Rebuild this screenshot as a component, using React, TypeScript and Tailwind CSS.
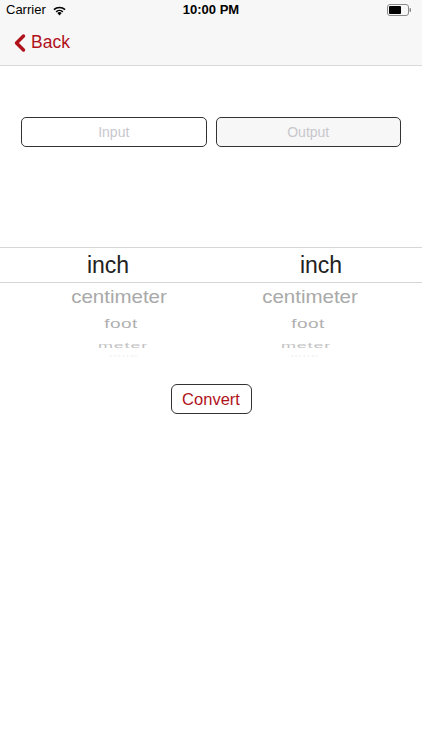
import { ChevronLeft } from "lucide-react";

const units = ["inch", "centimeter", "foot", "meter"];

// wheel rows curve toward the middle of the screen, so each row gets a small x offset
function PickerColumn({ selected, side }: { selected: string; side: "left" | "right" }) {
    const left = side === "left";
    return (
        <div className="flex-1 flex flex-col items-center">
            <div className="h-[36px] flex items-center text-[23px] text-[#222]">{selected}</div>
            <div className={`h-[29px] flex items-center text-[20.5px] text-[#a9a9a9] [transform:scaleY(0.88)] ${left ? "translate-x-[11px]" : "-translate-x-[11px]"}`}>centimeter</div>
            <div className={`h-[25px] flex items-center text-[19px] tracking-[0.5px] text-[#b0b0b0] [transform:scaleY(0.7)] ${left ? "translate-x-[13px]" : "-translate-x-[13px]"}`}>foot</div>
            <div className={`h-[16px] flex items-center text-[18px] tracking-[0.8px] text-[#c2c2c2] [transform:scaleY(0.42)] ${left ? "translate-x-[15px]" : "-translate-x-[15px]"}`}>meter</div>
            <div className={`h-[6px] flex items-center text-[14px] tracking-[1px] text-[#e4e4e4] [transform:scaleY(0.2)] overflow-hidden ${left ? "translate-x-[16px]" : "-translate-x-[16px]"}`}>mile</div>
        </div>
    );
}

export default function App() {
    return (
        <div className="w-[422px] h-[750px] bg-white font-['Liberation_Sans',sans-serif] overflow-hidden">
            <div className="bg-[#f7f7f7] border-b border-[#d9d9d9]">
                <div className="h-[20px] flex items-center justify-between px-[6px] text-[13px] text-black">
                    <div className="flex items-center gap-[6px] w-[120px]">
                        <span>Carrier</span>
                        <svg width="15" height="11" viewBox="0 0 15 11">
                            <path d="M7.5 10.5 L5.3 8 A3.2 3.2 0 0 1 9.7 8 Z" fill="#000" />
                            <path d="M3.6 6.3 A5.6 5.6 0 0 1 11.4 6.3 L10.3 7.4 A4 4 0 0 0 4.7 7.4 Z" fill="#000" />
                            <path d="M1.4 4.1 A8.8 8.8 0 0 1 13.6 4.1 L12.5 5.2 A7.2 7.2 0 0 0 2.5 5.2 Z" fill="#000" />
                        </svg>
                    </div>
                    <span className="font-bold text-[13px]">10:00 PM</span>
                    <div className="w-[120px] flex justify-end pr-[4px]">
                        <svg width="25" height="12" viewBox="0 0 25 12">
                            <rect x="0.5" y="0.5" width="21" height="11" rx="2.5" fill="none" stroke="#8a8a8a" />
                            <rect x="2" y="2" width="12" height="8" rx="1" fill="#000" />
                            <rect x="22.5" y="4" width="1.5" height="4" rx="0.7" fill="#8a8a8a" />
                        </svg>
                    </div>
                </div>
                <div className="h-[45px] flex items-center pl-[6px] text-[#b0121b]">
                    <ChevronLeft size={28} strokeWidth={3} className="-mr-[3px]" />
                    <span className="text-[17.5px]">Back</span>
                </div>
            </div>

            <div className="flex gap-[9px] px-[21px] mt-[51px]">
                <div className="flex-1 h-[30px] border border-[#333] rounded-[5px] flex items-center justify-center text-[14px] text-[#c7c7cd]">Input</div>
                <div className="flex-1 h-[30px] border border-[#333] rounded-[5px] bg-[#f7f7f7] flex items-center justify-center text-[14px] text-[#c7c7cd]">Output</div>
            </div>

            <div className="mt-[100px] relative">
                <div className="absolute left-0 right-0 top-0 h-[36px] border-y border-[#d6d6d6]" />
                <div className="flex">
                    <div className="w-[216px] flex"><PickerColumn selected={units[0]} side="left" /></div>
                    <div className="flex-1 flex pl-[4px]"><PickerColumn selected={units[0]} side="right" /></div>
                </div>
            </div>

            <div className="flex justify-center mt-[25px]">
                <div className="w-[81px] h-[30px] border border-[#333] rounded-[6px] flex items-center justify-center text-[16.5px] text-[#b0121b]">Convert</div>
            </div>
        </div>
    );
}
